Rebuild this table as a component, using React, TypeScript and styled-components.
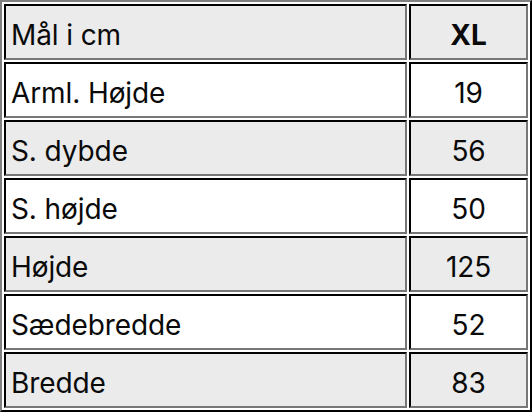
import React from "react";
import styled, { createGlobalStyle } from "styled-components";

const GlobalStyle = createGlobalStyle`
    html, body {
        margin: 0;
        padding: 0;
        background: #ffffff;
    }
`;

const SizeTable = styled.table`
    width: 532px;
    border-collapse: separate;
    border-spacing: 2px;
    border-style: solid;
    border-width: 2px;
    border-color: #808080 #000000 #000000 #808080;
    font-family: Inter, "Noto Sans", sans-serif;
    color: #0a0a0a;
`;

const Row = styled.tr<{ $shaded: boolean }>`
    background: ${p => (p.$shaded ? "#ebebeb" : "#ffffff")};
`;

const Cell = styled.td<{ $value?: boolean; $head?: boolean }>`
    height: 46px;
    padding: 6px 0 0 ${p => (p.$value ? "0" : "5px")};
    border-style: solid;
    border-width: 2px;
    border-color: #000000 #777777 #777777 #000000;
    font-size: 28px;
    font-weight: ${p => (p.$head ? 700 : 400)};
    letter-spacing: -0.1px;
    text-align: ${p => (p.$value ? "center" : "left")};
    width: ${p => (p.$value ? "115px" : "auto")};
    line-height: 1;
`;

const rows: { label: string; value: string }[] = [
    { label: "Mål i cm", value: "XL" },
    { label: "Arml. Højde", value: "19" },
    { label: "S. dybde", value: "56" },
    { label: "S. højde", value: "50" },
    { label: "Højde", value: "125" },
    { label: "Sædebredde", value: "52" },
    { label: "Bredde", value: "83" },
];

export default function App() {
    return (
        <>
            <GlobalStyle />
            <SizeTable>
                <tbody>
                    {rows.map((row, i) => (
                        <Row key={row.label} $shaded={i % 2 === 0}>
                            <Cell>{row.label}</Cell>
                            <Cell $value $head={i === 0}>
                                {row.value}
                            </Cell>
                        </Row>
                    ))}
                </tbody>
            </SizeTable>
        </>
    );
}
